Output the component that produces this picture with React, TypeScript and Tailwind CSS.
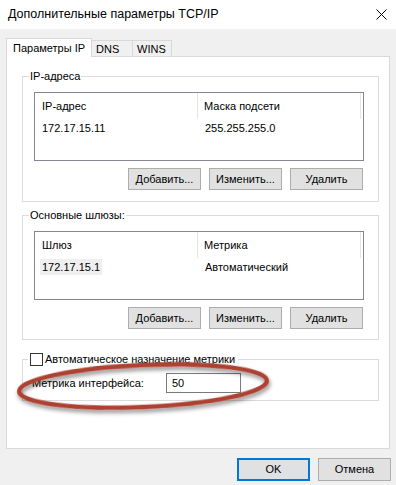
import React from 'react';

const Btn = ({ label }: { label: string }) => (
  <button className="w-[73px] h-[22px] bg-[#e1e1e1] border border-[#adadad] text-[11px] text-black leading-none">
    {label}
  </button>
);

const ListBox = ({
  col1,
  col2,
  val1,
  val2,
  selected,
}: {
  col1: string;
  col2: string;
  val1: string;
  val2: string;
  selected?: boolean;
}) => (
  <div className="w-[330px] h-[69px] border border-[#828790] bg-white">
    <div className="flex h-[26px] items-center">
      <div className="w-[163px] h-full flex items-center pl-[7px] pt-[1px] border-r border-[#e5e5e5]">{col1}</div>
      <div className="w-[163px] h-full flex items-center pl-[6px] pt-[1px] border-r border-[#e5e5e5]">{col2}</div>
    </div>
    <div className="flex h-[16px] items-center mt-[1px]">
      <div className="w-[164px]">
        {selected ? (
          <span className="ml-[5px] px-[2px] h-[16px] inline-flex items-center bg-[#efefef]">{val1}</span>
        ) : (
          <span className="pl-[7px]">{val1}</span>
        )}
      </div>
      <div className="pl-[6px]">{val2}</div>
    </div>
  </div>
);

const Group = ({ title, height, children }: { title: React.ReactNode; height: string; children: React.ReactNode }) => (
  <div className={`relative w-[357px] border border-[#dcdcdc] ${height}`}>
    <div className="absolute -top-[7px] left-[6px] px-[1px] bg-white leading-[13px]">{title}</div>
    {children}
  </div>
);

export default function App() {
  return (
    <div className="relative w-[396px] h-[485px] overflow-hidden bg-[#f0f0f0] text-[11px] text-black font-['Liberation_Sans',Arial,sans-serif]">
      {/* title bar */}
      <div className="h-[29px] bg-white flex items-center justify-between pl-[8px] pr-[8px]">
        <span className="text-[12.5px]">Дополнительные параметры TCP/IP</span>
        <svg width="11" height="11" viewBox="0 0 11 11" className="mr-[1px]">
          <path d="M0.5 0.5 L10.5 10.5 M10.5 0.5 L0.5 10.5" stroke="#000" strokeWidth="1" fill="none" />
        </svg>
      </div>

      {/* tabs */}
      <div className="pt-[9px] pl-[6px]">
        <div className="flex items-start h-[19px] -mb-[1px] relative z-10">
          <div className="w-[86px] h-[19px] bg-white border border-b-0 border-[#d9d9d9] pl-[6px] flex items-center">
            Параметры IP
          </div>
          <div className="mt-[2px] w-[41px] h-[16px] border-t border-r border-[#d9d9d9] pl-[4px] pt-[2px] flex items-center">DNS</div>
          <div className="mt-[2px] w-[39px] h-[16px] border-t border-r border-[#d9d9d9] pl-[4px] pt-[2px] flex items-center">WINS</div>
        </div>

        {/* panel */}
        <div className="w-[384px] h-[393px] bg-white border border-[#d9d9d9] pt-[19px] pl-[15px]">
          <Group title="IP-адреса" height="h-[126px]">
            <div className="pt-[15px] pl-[11px]">
              <ListBox col1="IP-адрес" col2="Маска подсети" val1="172.17.15.11" val2="255.255.255.0" />
              <div className="w-[330px] mt-[7px] pr-[1px] flex justify-end gap-[8px]">
                <Btn label="Добавить..." />
                <Btn label="Изменить..." />
                <Btn label="Удалить" />
              </div>
            </div>
          </Group>

          <div className="mt-[13px]">
            <Group title="Основные шлюзы:" height="h-[125px]">
              <div className="pt-[15px] pl-[11px]">
                <ListBox col1="Шлюз" col2="Метрика" val1="172.17.15.1" val2="Автоматический" selected />
                <div className="w-[330px] mt-[7px] pr-[1px] flex justify-end gap-[8px]">
                  <Btn label="Добавить..." />
                  <Btn label="Изменить..." />
                  <Btn label="Удалить" />
                </div>
              </div>
            </Group>
          </div>

          <div className="mt-[19px]">
            <div className="relative w-[357px] h-[42px] border border-[#dcdcdc]">
              <div className="absolute -top-[7px] left-[5px] px-[2px] bg-white flex items-center gap-[2px] leading-[13px]">
                <span className="w-[13px] h-[13px] border border-[#333333] bg-white" />
                <span className="pr-[1px]">Автоматическое назначение метрики</span>
              </div>
              <div className="pt-[13px] pl-[9px] flex items-center">
                <span className="w-[134px]">Метрика интерфейса:</span>
                <div className="w-[75px] h-[20px] border border-[#7a7a7a] pl-[5px] flex items-center">50</div>
              </div>
            </div>
          </div>
        </div>
      </div>

      {/* dialog buttons */}
      <div className="mt-[9px] pr-[5px] flex justify-end gap-[8px]">
        <button className="w-[73px] h-[23px] bg-[#e1e1e1] border-2 border-[#0078d7] text-[11px] leading-none">OK</button>
        <button className="w-[73px] h-[23px] bg-[#e1e1e1] border border-[#adadad] text-[11px] leading-none">Отмена</button>
      </div>

      {/* red highlight ellipse */}
      <svg className="absolute left-0 top-0 pointer-events-none" width="396" height="485" viewBox="0 0 396 485">
        <defs>
          <filter id="sh" x="-20%" y="-60%" width="140%" height="220%">
            <feDropShadow dx="1" dy="3" stdDeviation="2.2" floodColor="#000" floodOpacity="0.45" />
          </filter>
        </defs>
        <ellipse
          cx="143"
          cy="386"
          rx="124"
          ry="21"
          transform="rotate(-2.5 143 386)"
          fill="none"
          stroke="#ad4230"
          strokeWidth="4.5"
          filter="url(#sh)"
        />
      </svg>
    </div>
  );
}
